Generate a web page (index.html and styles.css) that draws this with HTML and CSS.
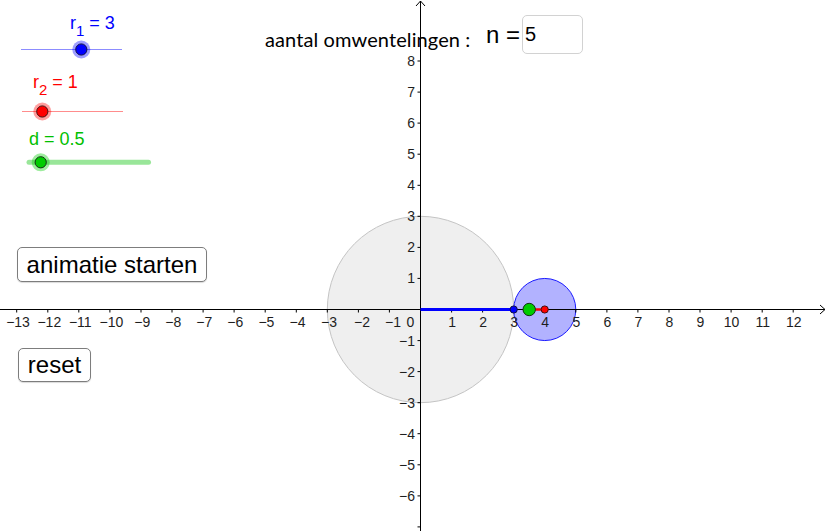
FILE: index.html
```html
<!DOCTYPE html>
<html>
<head>
<meta charset="utf-8">
<link rel="stylesheet" href="styles.css">
</head>
<body>
<div class="applet">
  <svg class="canvas" width="827" height="531" viewBox="0 0 827 531" xmlns="http://www.w3.org/2000/svg">
    <!-- circles -->
    <circle cx="420.5" cy="309.5" r="93.18" fill="#efefef" stroke="#c4c4c4" stroke-width="1"/>
    <circle cx="544.74" cy="309.5" r="31.06" fill="#b2b2ff" stroke="#1a1aff" stroke-width="1"/>

    <!-- axes -->
    <g stroke="#000" stroke-width="1" fill="none">
      <line x1="0" y1="309.5" x2="825" y2="309.5"/>
      <polyline points="820,305 825,309.5 820,314"/>
      <line x1="420.5" y1="1" x2="420.5" y2="531"/>
      <polyline points="416,6 420.5,1 425,6"/>
    </g>
    <g stroke="#000" stroke-width="1">
      <line x1="16.7" y1="309.5" x2="16.7" y2="312.5"/>
      <line x1="47.8" y1="309.5" x2="47.8" y2="312.5"/>
      <line x1="78.8" y1="309.5" x2="78.8" y2="312.5"/>
      <line x1="109.9" y1="309.5" x2="109.9" y2="312.5"/>
      <line x1="141" y1="309.5" x2="141" y2="312.5"/>
      <line x1="172" y1="309.5" x2="172" y2="312.5"/>
      <line x1="203.1" y1="309.5" x2="203.1" y2="312.5"/>
      <line x1="234.1" y1="309.5" x2="234.1" y2="312.5"/>
      <line x1="265.2" y1="309.5" x2="265.2" y2="312.5"/>
      <line x1="296.3" y1="309.5" x2="296.3" y2="312.5"/>
      <line x1="327.3" y1="309.5" x2="327.3" y2="312.5"/>
      <line x1="358.4" y1="309.5" x2="358.4" y2="312.5"/>
      <line x1="389.4" y1="309.5" x2="389.4" y2="312.5"/>
      <line x1="451.6" y1="309.5" x2="451.6" y2="312.5"/>
      <line x1="482.6" y1="309.5" x2="482.6" y2="312.5"/>
      <line x1="513.7" y1="309.5" x2="513.7" y2="312.5"/>
      <line x1="544.7" y1="309.5" x2="544.7" y2="312.5"/>
      <line x1="575.8" y1="309.5" x2="575.8" y2="312.5"/>
      <line x1="606.9" y1="309.5" x2="606.9" y2="312.5"/>
      <line x1="637.9" y1="309.5" x2="637.9" y2="312.5"/>
      <line x1="669" y1="309.5" x2="669" y2="312.5"/>
      <line x1="700" y1="309.5" x2="700" y2="312.5"/>
      <line x1="731.1" y1="309.5" x2="731.1" y2="312.5"/>
      <line x1="762.2" y1="309.5" x2="762.2" y2="312.5"/>
      <line x1="793.2" y1="309.5" x2="793.2" y2="312.5"/>

      <line x1="417.5" y1="61" x2="420.5" y2="61"/>
      <line x1="417.5" y1="92.1" x2="420.5" y2="92.1"/>
      <line x1="417.5" y1="123.1" x2="420.5" y2="123.1"/>
      <line x1="417.5" y1="154.2" x2="420.5" y2="154.2"/>
      <line x1="417.5" y1="185.3" x2="420.5" y2="185.3"/>
      <line x1="417.5" y1="216.3" x2="420.5" y2="216.3"/>
      <line x1="417.5" y1="247.4" x2="420.5" y2="247.4"/>
      <line x1="417.5" y1="278.4" x2="420.5" y2="278.4"/>
      <line x1="417.5" y1="340.6" x2="420.5" y2="340.6"/>
      <line x1="417.5" y1="371.6" x2="420.5" y2="371.6"/>
      <line x1="417.5" y1="402.7" x2="420.5" y2="402.7"/>
      <line x1="417.5" y1="433.7" x2="420.5" y2="433.7"/>
      <line x1="417.5" y1="464.8" x2="420.5" y2="464.8"/>
      <line x1="417.5" y1="495.9" x2="420.5" y2="495.9"/>
      <line x1="417.5" y1="526.9" x2="420.5" y2="526.9"/>
    </g>

    <g class="ticklabels" text-anchor="middle">
      <text x="18" y="327">−13</text>
      <text x="49.3" y="327">−12</text>
      <text x="80.3" y="327">−11</text>
      <text x="111.4" y="327">−10</text>
      <text x="142.2" y="327">−9</text>
      <text x="173.2" y="327">−8</text>
      <text x="204.3" y="327">−7</text>
      <text x="235.3" y="327">−6</text>
      <text x="266.4" y="327">−5</text>
      <text x="297.5" y="327">−4</text>
      <text x="329" y="327">−3</text>
      <text x="362" y="327">−2</text>
      <text x="393" y="327">−1</text>
      <text x="410.5" y="327">0</text>
      <text x="452.1" y="327">1</text>
      <text x="483.1" y="327">2</text>
      <text x="514.2" y="327">3</text>
      <text x="545.2" y="327">4</text>
      <text x="576.3" y="327">5</text>
      <text x="607.4" y="327">6</text>
      <text x="638.4" y="327">7</text>
      <text x="669.5" y="327">8</text>
      <text x="700.5" y="327">9</text>
      <text x="731.6" y="327">10</text>
      <text x="762.7" y="327">11</text>
      <text x="793.7" y="327">12</text>
    </g>
    <g class="ticklabels" text-anchor="end">
      <text x="415" y="66">8</text>
      <text x="415" y="97.1">7</text>
      <text x="415" y="128.1">6</text>
      <text x="415" y="159.2">5</text>
      <text x="415" y="190.3">4</text>
      <text x="415" y="221.3">3</text>
      <text x="415" y="252.4">2</text>
      <text x="415" y="283.4">1</text>
      <text x="415" y="345.6">−1</text>
      <text x="415" y="376.6">−2</text>
      <text x="415" y="407.7">−3</text>
      <text x="415" y="438.7">−4</text>
      <text x="415" y="469.8">−5</text>
      <text x="415" y="500.9">−6</text>
    </g>

    <!-- construction -->
    <line x1="420.5" y1="309.5" x2="513.7" y2="309.5" stroke="#0000ff" stroke-width="3"/>
    <line x1="529.2" y1="309.5" x2="544.7" y2="309.5" stroke="#ff0000" stroke-width="2.5"/>
    <circle cx="513.7" cy="309.5" r="3.6" fill="#0000ff" stroke="#101040" stroke-width="1"/>
    <circle cx="544.7" cy="309.5" r="3.6" fill="#ff0000" stroke="#401010" stroke-width="1"/>
    <circle cx="529.2" cy="309.5" r="6.2" fill="#00cc00" stroke="#103010" stroke-width="1"/>

    <!-- sliders -->
    <line x1="21" y1="49.5" x2="122" y2="49.5" stroke="#8c8cff" stroke-width="1"/>
    <circle cx="81.3" cy="49.5" r="9" fill="#0000ff" fill-opacity="0.38"/>
    <circle cx="81.3" cy="49.5" r="5.6" fill="#0000ff" stroke="#101040" stroke-width="1"/>

    <line x1="22" y1="111.5" x2="123" y2="111.5" stroke="#ff8c8c" stroke-width="1"/>
    <circle cx="42.3" cy="111.5" r="9" fill="#ff0000" fill-opacity="0.38"/>
    <circle cx="42.3" cy="111.5" r="5.6" fill="#ff0000" stroke="#401010" stroke-width="1"/>

    <line x1="29" y1="162.3" x2="148.5" y2="162.3" stroke="#99e699" stroke-width="5" stroke-linecap="round"/>
    <circle cx="40.7" cy="162.3" r="9" fill="#00cc00" fill-opacity="0.38"/>
    <circle cx="40.7" cy="162.3" r="5.6" fill="#00cc00" stroke="#103010" stroke-width="1"/>
  </svg>

  <div class="slabel slabel-r1">r<sub>1</sub> = 3</div>
  <div class="slabel slabel-r2">r<sub>2</sub> = 1</div>
  <div class="slabel slabel-d">d = 0.5</div>

  <div class="title">aantal omwentelingen :</div>
  <div class="nfield">
    <span class="nlabel">n =</span>
    <span class="nbox">5</span>
  </div>

  <button class="btn btn-start">animatie starten</button>
  <button class="btn btn-reset">reset</button>
</div>
</body>
</html>
```

FILE: styles.css
```css
html, body {
  margin: 0;
  padding: 0;
  background: #fff;
  overflow: hidden;
}

.applet {
  position: relative;
  width: 827px;
  height: 531px;
  overflow: hidden;
  font-family: "Liberation Sans", Arial, sans-serif;
}

.canvas {
  position: absolute;
  left: 0;
  top: 0;
  display: block;
}

.ticklabels {
  font-family: "Liberation Sans", Arial, sans-serif;
  font-size: 14px;
  fill: #1e1e1e;
}

.slabel {
  position: absolute;
  font-size: 18px;
  line-height: 18px;
  white-space: nowrap;
}

.slabel sub {
  font-size: 15px;
  line-height: 0;
  vertical-align: -7px;
}

.slabel-r1 {
  left: 70px;
  top: 14px;
  color: #0000ff;
}

.slabel-r2 {
  left: 33px;
  top: 73px;
  color: #ff0000;
}

.slabel-d {
  left: 29px;
  top: 130px;
  color: #00c000;
}

.title {
  position: absolute;
  left: 265px;
  top: 27px;
  font-family: Lato, "Open Sans", sans-serif;
  font-size: 20px;
  line-height: 24px;
  letter-spacing: 0.1px;
  color: #000;
  white-space: nowrap;
}

.nfield {
  position: absolute;
  left: 486px;
  top: 15px;
  display: flex;
  align-items: center;
  gap: 2px;
}

.nlabel {
  font-size: 24px;
  line-height: 39px;
  color: #000;
  white-space: nowrap;
}

.nbox {
  box-sizing: border-box;
  width: 61px;
  height: 39px;
  border: 1px solid #d2d2d2;
  border-radius: 5px;
  padding-left: 2px;
  font-size: 20px;
  line-height: 37px;
  color: #000;
  background: #fff;
}

.btn {
  position: absolute;
  box-sizing: border-box;
  margin: 0;
  padding: 0;
  background: #fff;
  border: 1px solid #7d7d7d;
  border-radius: 5px;
  font-family: "Liberation Sans", Arial, sans-serif;
  font-size: 24px;
  line-height: 30px;
  color: #000;
  text-align: center;
  box-shadow: 0 1px 1px rgba(0,0,0,0.15);
}

.btn-start {
  left: 17px;
  top: 247px;
  width: 190px;
  height: 35px;
}

.btn-reset {
  left: 18px;
  top: 348px;
  width: 73px;
  height: 34px;
}
```
